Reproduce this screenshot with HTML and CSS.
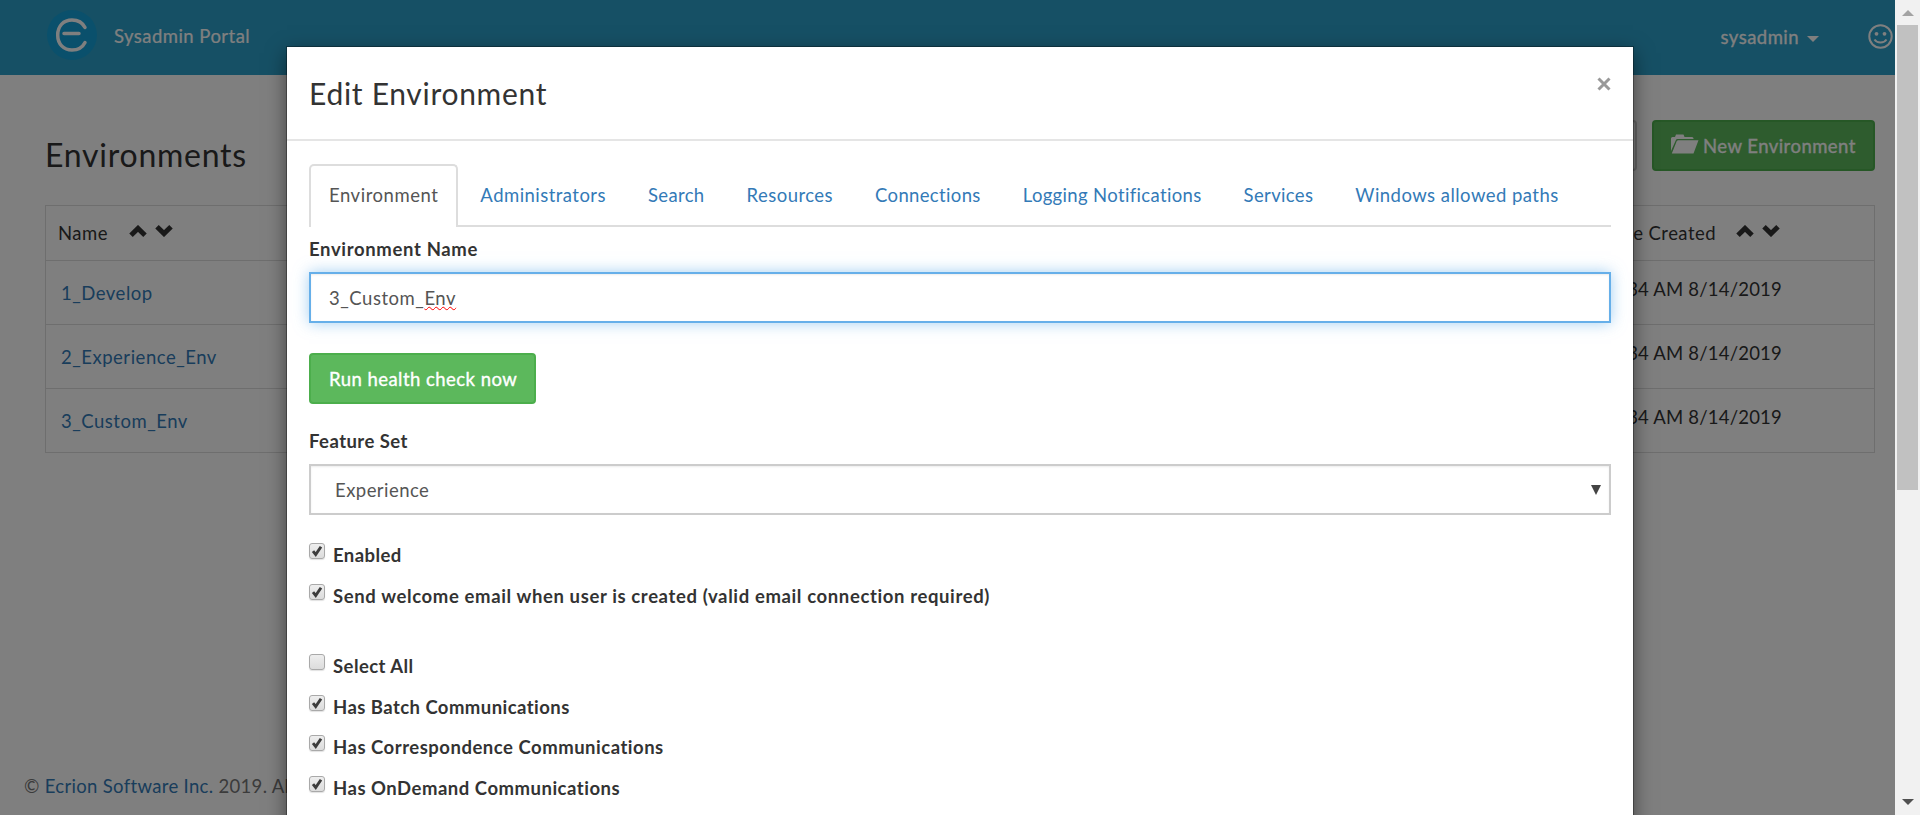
FILE: index.html
```html
<!DOCTYPE html>
<html lang="en">
<head>
<meta charset="utf-8">
<title>Sysadmin Portal</title>
<link rel="stylesheet" href="styles.css">
</head>
<body>
<svg class="defs" width="0" height="0">
  <symbol id="up" viewBox="0 0 18 12"><path d="M2 10.200 9 3.400l7 6.800" fill="none" stroke="currentColor" stroke-width="5"/></symbol>
  <symbol id="down" viewBox="0 0 18 12"><path d="M2 1.800 9 8.600l7-6.800" fill="none" stroke="currentColor" stroke-width="5"/></symbol>
  <symbol id="tick" viewBox="0 0 16 16"><path d="M4 8.200l2.700 3.300L12 3.800" fill="none" stroke="#3c3c3c" stroke-width="2.900"/></symbol>
</svg>
<div class="app">
  <header class="topbar">
    <svg class="logo" width="50" height="50" viewBox="0 0 50 50"><circle cx="25" cy="25" r="25" fill="#14a0d8"/><path d="M38 17.500C35.500 12.500 31 10 25 10c-8.500 0-14.300 6-14.300 15S16.500 40 25 40c6 0 10.500-2.500 13-7.500M17 23.500h15" fill="none" stroke="#fff" stroke-width="3.500" stroke-linecap="round"/></svg>
    <span class="brand">Sysadmin Portal</span>
    <span class="user">sysadmin</span>
    <i class="caret"></i>
    <svg class="smiley" width="25" height="25" viewBox="0 0 25 25"><circle cx="12.500" cy="12.500" r="11.200" fill="none" stroke="#fff" stroke-width="2"/><circle cx="8.500" cy="9.800" r="1.900" fill="#fff"/><circle cx="16.500" cy="9.800" r="1.900" fill="#fff"/><path d="M6.500 15.500c2.500 4 9.500 4 12 0" fill="none" stroke="#fff" stroke-width="2"/></svg>
  </header>
  <main class="page">
    <div class="toolbar">
      <h1 class="heading">Environments</h1>
      <span class="btn btn-plain"></span>
      <span class="btn btn-new"><svg width="28" height="20" viewBox="0 0 28 20"><path d="M0 17V4.500Q0 3 1.500 3H4l1-2.500h7.500L13.500 3H21q1.500 0 1.500 1.500V5H6.500Q5.300 5 4.800 6.200z" fill="#fff"/><path d="M7 6.200h20.500L22.500 19.500H.8L5.800 7Z" fill="#fff"/></svg><span>New Environment</span></span>
    </div>
    <div class="table">
      <div class="row row-head"><span class="name">Name</span><svg class="up" width="18" height="12"><use href="#up"/></svg><svg class="down" width="18" height="12"><use href="#down"/></svg><span class="created">Date Created</span><svg class="up" width="18" height="12"><use href="#up"/></svg><svg class="down" width="18" height="12"><use href="#down"/></svg></div>
      <div class="row"><a class="env">1_Develop</a><span class="date">10:34 AM 8/14/2019</span></div>
      <div class="row"><a class="env">2_Experience_Env</a><span class="date">10:34 AM 8/14/2019</span></div>
      <div class="row"><a class="env">3_Custom_Env</a><span class="date">10:34 AM 8/14/2019</span></div>
    </div>
  </main>
  <footer class="footer">© <a>Ecrion Software Inc.</a> 2019. All</footer>
</div>
<div class="backdrop"></div>
<section class="modal">
  <div class="modal-head"><h2 class="title">Edit Environment</h2><svg class="close" width="14" height="14" viewBox="0 0 14 14"><path d="M1.500 1.500l11 11M12.500 1.500l-11 11" stroke="#999" stroke-width="3"/></svg></div>
  <div class="modal-body">
    <nav class="tabs">
      <a class="tab active">Environment</a><a class="tab t-admin">Administrators</a><a class="tab t-search">Search</a><a class="tab t-res">Resources</a><a class="tab t-conn">Connections</a><a class="tab t-log">Logging Notifications</a><a class="tab t-serv">Services</a><a class="tab t-win">Windows allowed paths</a>
    </nav>
    <div class="label l-name">Environment Name</div>
    <div class="field focus"><span>3_Custom_<span class="typo">Env</span></span></div>
    <div class="btn btn-run">Run health check now</div>
    <div class="label">Feature Set</div>
    <div class="field select"><span>Experience</span><svg width="10" height="10" viewBox="0 0 10 10"><path d="M0 0h10L5 10z" fill="#444"/></svg></div>
    <div class="checks">
      <div class="check"><i class="box"><svg width="16" height="16"><use href="#tick"/></svg></i>Enabled</div>
      <div class="check c-send"><i class="box"><svg width="16" height="16"><use href="#tick"/></svg></i>Send welcome email when user is created (valid email connection required)</div>
      <div class="check"><i class="box"></i>Select All</div>
      <div class="check c-batch"><i class="box"><svg width="16" height="16"><use href="#tick"/></svg></i>Has Batch Communications</div>
      <div class="check c-corr"><i class="box"><svg width="16" height="16"><use href="#tick"/></svg></i>Has Correspondence Communications</div>
      <div class="check c-corr"><i class="box"><svg width="16" height="16"><use href="#tick"/></svg></i>Has OnDemand Communications</div>
    </div>
  </div>
</section>
<div class="scrollbar"><i class="arrow-up"></i><i class="thumb"></i><i class="arrow-down"></i></div>
</body>
</html>
```
FILE: styles.css
```css
* { box-sizing: border-box; }
body { margin: 0; width: 1920px; height: 815px; overflow: hidden; position: relative; background: #fff; font: 18.5px/26px Lato, sans-serif; letter-spacing: .46px; color: #333; }
h1, h2 { margin: 0; font-weight: 400; }
a { color: #337ab7; text-decoration: none; white-space: nowrap; }
svg { display: block; flex: none; }
.defs { position: absolute; }
.app { width: 1895px; height: 815px; display: flex; flex-direction: column; }
.topbar { height: 75px; background: #2ca0ca; color: #fff; display: flex; align-items: center; padding: 0 2px 0 47px; }
.logo { margin-top: -5px; }
.brand { margin: -3px auto 0 17px; -webkit-text-stroke: .2px; }
.user { margin-right: 8px; margin-top: -2px; -webkit-text-stroke: .3px; }
.caret { border: 6px solid transparent; border-top-color: #fff; border-bottom: 0; margin-right: 49px; margin-top: 3px; }
.smiley { margin-top: -2px; }
.page { flex: 1; padding: 45px 20px 0 45px; }
.toolbar { display: flex; height: 51px; margin-bottom: 34px; }
.heading { font-size: 32px; letter-spacing: .75px; line-height: 32px; padding-top: 19px; margin-right: auto; }
.btn { display: flex; align-items: center; height: 51px; border-radius: 4px; -webkit-text-stroke: .35px; }
.btn-plain { width: 60px; border: 2px solid #ccc; margin-right: 15px; }
.btn-new { width: 223px; background: #5cb85c; border: 2px solid #4cae4c; color: #fff; padding-left: 17px; gap: 4px; white-space: nowrap; }
.btn-new svg { margin-top: -3px; }
.table { border: 1px solid #ddd; border-bottom: 0; }
.row { height: 64px; display: flex; align-items: center; border-bottom: 1px solid #ddd; padding-left: 15px; }
.row-head { height: 55px; padding-left: 12px; padding-right: 94px; }
.env { letter-spacing: .52px; }
.name { margin-right: 21px; }
.up { margin-right: 8px; margin-top: -4px; }
.down { margin-top: -4px; }
.created { margin-left: auto; margin-right: 20px; }
.date { margin-left: auto; margin-right: 92px; margin-top: -8px; letter-spacing: .2px; }
.footer { height: 42px; padding-left: 24px; color: #777; white-space: nowrap; letter-spacing: .32px; }
.backdrop { position: absolute; inset: 0 25px 0 0; background: rgba(0, 0, 0, .5); }
.modal { position: absolute; left: 287px; top: 47px; width: 1346px; height: 790px; background: #fff; box-shadow: 0 0 0 1px rgba(0, 0, 0, .3), 0 6px 19px rgba(0, 0, 0, .5); }
.modal-head { height: 94px; border-bottom: 2px solid #e5e5e5; display: flex; justify-content: space-between; align-items: center; padding: 0 22px 0 22px; }
.title { font-size: 30px; letter-spacing: .7px; }
.close { margin-top: -19px; }
.modal-body { padding: 23px 22px 0; }
.tabs { display: flex; height: 63px; border-bottom: 2px solid #ddd; margin-bottom: 9px; }
.tab { height: 61px; line-height: 62px; padding: 0 20px; margin-right: 2px; letter-spacing: .46px; }
.active { height: 63px; line-height: 58px; border: 2px solid #ddd; border-bottom: 0; border-radius: 5px 5px 0 0; background: #fff; color: #555; padding: 0 18px; letter-spacing: .53px; }
.t-search, .t-conn, .t-log, .t-serv { letter-spacing: .35px; }
.label { font-weight: 700; margin-bottom: 10px; letter-spacing: .45px; }
.l-name { letter-spacing: .65px; }
.field { height: 51px; border: 2px solid #ccc; display: flex; align-items: center; padding: 0 18px; color: #555; box-shadow: inset 0 1px 2px rgba(0, 0, 0, .08); }
.focus { border-color: #66afe9; letter-spacing: .54px; box-shadow: inset 0 1px 2px rgba(0, 0, 0, .08), 0 0 14px rgba(102, 175, 233, .6); margin-bottom: 30px; }
.typo { text-decoration: underline wavy #f00 1.3px; text-underline-offset: 1px; text-decoration-skip-ink: none; }
.btn-run { width: 227px; background: #5cb85c; border: 2px solid #4cae4c; color: #fff; padding-left: 18px; margin-bottom: 24px; white-space: nowrap; }
.select { justify-content: space-between; padding: 0 8px 0 24px; }
.checks { padding-top: 27px; }
.check { display: flex; height: 26px; gap: 8px; margin-bottom: 15px; font-weight: 700; white-space: nowrap; letter-spacing: .44px; }
.c-send { margin-bottom: 44px; letter-spacing: .62px; }
.c-batch { margin-bottom: 14px; }
.c-corr { letter-spacing: .51px; }
.box { flex: none; width: 16px; height: 16px; margin-top: 1px; border: 1px solid #a9a9a9; border-radius: 3px; background: linear-gradient(#eee, #dcdcdc); box-shadow: 0 1px 1px rgba(0, 0, 0, .12); }
.box svg { margin: -1px; }
.scrollbar { position: absolute; right: 0; top: 0; width: 25px; height: 815px; background: #f1f1f1; display: flex; flex-direction: column; align-items: center; }
.arrow-up { margin: 10px 0 9px; border: 6px solid transparent; border-bottom-color: #a3a3a3; border-top: 0; }
.thumb { width: 21px; height: 465px; background: #c1c1c1; }
.arrow-down { margin-top: auto; margin-bottom: 10px; border: 6px solid transparent; border-top-color: #505050; border-bottom: 0; }
```
